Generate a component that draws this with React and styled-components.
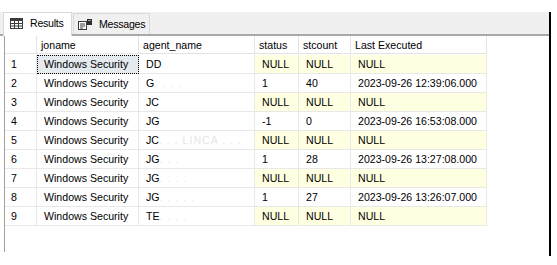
import React from "react";
import styled, { createGlobalStyle } from "styled-components";

const Global = createGlobalStyle`
  html, body { margin: 0; padding: 0; background: #fff; }
  body { font-family: "Liberation Sans", Arial, sans-serif; color: #000; }
`;

const Pane = styled.div`
  margin-top: 12px;
  width: 549px;
  height: 244px;
  border-right: 2px solid #000;
  display: flex;
  flex-direction: column;
`;

const TabBar = styled.div`
  height: 22px;
  background: #f0f0f0;
  border-bottom: 2px solid #a9a9a9;
  display: flex;
  align-items: flex-end;
  padding-left: 3px;
  gap: 1px;
`;

const Tab = styled.div`
  box-sizing: border-box;
  height: ${(p) => (p.$active ? "24px" : "21px")};
  margin-bottom: ${(p) => (p.$active ? "-2px" : "0")};
  width: ${(p) => p.$w}px;
  background: ${(p) => (p.$active ? "#fff" : "#f0f0f0")};
  border: 1px solid #d9d9d9;
  border-bottom: none;
  display: flex;
  align-items: center;
  gap: ${(p) => p.$gap}px;
  padding-left: ${(p) => p.$pl}px;
  padding-bottom: ${(p) => (p.$active ? "3px" : "0")};
  font-size: 10.6px;
  letter-spacing: -0.25px;
  white-space: nowrap;
`;

const GridArea = styled.div`
  margin-left: 4px;
  border-left: 1px solid #a0a0a0;
  height: 216px;
`;

const Table = styled.div`
  display: grid;
  grid-template-columns: 32px 102px 116px 44px 52px 136px;
  grid-auto-rows: 19px;
  width: 482px;
`;

const Head = styled.div`
  box-sizing: border-box;
  height: 18px;
  border-right: 1px solid #e3e3e3;
  border-bottom: 1px solid #e3e3e3;
  padding-left: 4px;
  font-size: 10.6px;
  display: flex;
  align-items: center;
  white-space: nowrap;
`;

const Cell = styled.div`
  box-sizing: border-box;
  border-right: 1px solid #e8e8e8;
  border-bottom: 1px solid #e8e8e8;
  padding-left: ${(p) => (p.$num ? 6 : 7)}px;
  font-size: 10.6px;
  display: flex;
  align-items: center;
  white-space: nowrap;
  overflow: hidden;
  background: ${(p) => (p.$sel ? "#e5eaef" : p.$null ? "#ffffe1" : "#fff")};
  outline: ${(p) => (p.$sel ? "1px dotted #000" : "none")};
  outline-offset: -1px;
`;

const Faint = styled.span`
  color: #e6e6e6;
  letter-spacing: 1px;
`;

const GridIcon = () => (
  <svg width="13" height="11" viewBox="0 0 13 11">
    <rect x="0.5" y="0.5" width="12" height="10" fill="#fff" stroke="#3b3b3b" />
    <rect x="0.5" y="0.5" width="12" height="2.5" fill="#3b3b3b" />
    <line x1="0.5" y1="5.5" x2="12.5" y2="5.5" stroke="#3b3b3b" />
    <line x1="0.5" y1="8" x2="12.5" y2="8" stroke="#3b3b3b" />
    <line x1="4.5" y1="0.5" x2="4.5" y2="10.5" stroke="#3b3b3b" />
    <line x1="8.5" y1="0.5" x2="8.5" y2="10.5" stroke="#3b3b3b" />
  </svg>
);

const MsgIcon = () => (
  <svg width="15" height="11" viewBox="0 0 15 11">
    <rect x="0.5" y="2.5" width="8" height="8" fill="#fff" stroke="#3b3b3b" />
    <line x1="2" y1="5" x2="7" y2="5" stroke="#3b3b3b" />
    <line x1="2" y1="7" x2="7" y2="7" stroke="#3b3b3b" />
    <line x1="2" y1="9" x2="5" y2="9" stroke="#3b3b3b" />
    <rect x="9" y="0" width="5" height="6" fill="#2e2e2e" />
    <rect x="10" y="1" width="3" height="1" fill="#9a9a9a" />
  </svg>
);

const rows = [
  { a: "DD", f: "           .", s: null, c: null, d: null },
  { a: "G", f: "        . . . .", s: "1", c: "40", d: "2023-09-26 12:39:06.000" },
  { a: "JC", f: "", s: null, c: null, d: null },
  { a: "JG", f: "", s: "-1", c: "0", d: "2023-09-26 16:53:08.000" },
  { a: "JC", f: " . . . LINCA . . .", s: null, c: null, d: null },
  { a: "JG", f: "           . . .", s: "1", c: "28", d: "2023-09-26 13:27:08.000" },
  { a: "JG", f: " . . .         .", s: null, c: null, d: null },
  { a: "JG", f: "       . . . . .", s: "1", c: "27", d: "2023-09-26 13:26:07.000" },
  { a: "TE", f: "      . . . .", s: null, c: null, d: null },
];

export default function App() {
  return (
    <>
      <Global />
      <Pane>
        <TabBar>
          <Tab $active $w={69} $pl={6} $gap={7}>
            <GridIcon />
            <span>Results</span>
          </Tab>
          <Tab $w={77} $pl={4} $gap={6}>
            <MsgIcon />
            <span>Messages</span>
          </Tab>
        </TabBar>
        <GridArea>
          <Table>
            <Head />
            <Head>joname</Head>
            <Head>agent_name</Head>
            <Head>status</Head>
            <Head>stcount</Head>
            <Head>Last Executed</Head>
            {rows.map((r, i) => (
              <React.Fragment key={i}>
                <Cell $num>{i + 1}</Cell>
                <Cell $sel={i === 0}>Windows Security</Cell>
                <Cell>
                  {r.a}
                  <Faint>{r.f}</Faint>
                </Cell>
                <Cell $null={r.s === null}>{r.s ?? "NULL"}</Cell>
                <Cell $null={r.c === null}>{r.c ?? "NULL"}</Cell>
                <Cell $null={r.d === null}>{r.d ?? "NULL"}</Cell>
              </React.Fragment>
            ))}
          </Table>
        </GridArea>
      </Pane>
    </>
  );
}
